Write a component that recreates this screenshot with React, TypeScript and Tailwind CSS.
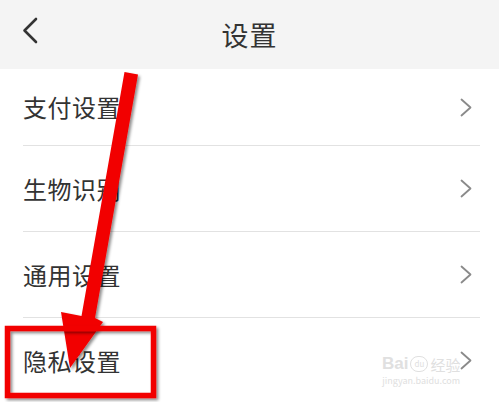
const ROWS = ["支付设置", "生物识别", "通用设置", "隐私设置"];

function BackIcon() {
    return (
        <svg width="16" height="27" viewBox="0 0 16 27" fill="none">
            <path d="M14 2 L2.5 13.5 L14 25" stroke="#333" strokeWidth="2.6" strokeLinecap="round" strokeLinejoin="round" />
        </svg>
    );
}

function ArrowRight() {
    return (
        <svg width="12" height="19" viewBox="0 0 12 19" fill="none">
            <path d="M1.5 1.5 L10.5 9.5 L1.5 17.5" stroke="#8a8a8a" strokeWidth="1.8" strokeLinecap="round" strokeLinejoin="round" />
        </svg>
    );
}

function SettingRow({ label, first }: { label: string; first?: boolean }) {
    return (
        <div className={`pl-[23px] pr-[19px] ${first ? "h-[77px]" : "h-[86px]"}`}>
            <div className="h-full flex items-center justify-between border-b border-[#e2e2e2] pr-[8px]">
                <span className="text-[24px] text-[#333] leading-none tracking-[0.5px]">{label}</span>
                <ArrowRight />
            </div>
        </div>
    );
}

// red annotation drawn over the screenshot: arrow + highlight box
function Annotation() {
    return (
        <svg className="absolute inset-0 pointer-events-none" width="499" height="402" viewBox="0 0 499 402">
            <defs>
                <filter id="shadow" x="-20%" y="-20%" width="140%" height="140%">
                    <feDropShadow dx="2" dy="2" stdDeviation="1.5" floodColor="#000" floodOpacity="0.45" />
                </filter>
            </defs>
            <polygon
                points="124.5,72 138,74.5 95,318 103,322 70,368 61,312 81.5,316"
                fill="#f20000"
                filter="url(#shadow)"
            />
            <rect x="7.5" y="328.5" width="146" height="67" fill="none" stroke="#f20000" strokeWidth="5.5" filter="url(#shadow)" />
        </svg>
    );
}

function Watermark() {
    return (
        <div className="absolute left-[382px] top-[355px] flex flex-col items-center text-[#e0e0e0] leading-none">
            <div className="flex items-end gap-[2px]">
                <span className="text-[17px] font-bold" style={{ fontFamily: "Arial, sans-serif" }}>Bai</span>
                <span className="w-[18px] h-[16px] rounded-full border border-[#e0e0e0] text-[8px] flex items-center justify-center">du</span>
                <span className="text-[15px]">经验</span>
            </div>
            <span className="text-[9px] mt-[4px]">jingyan.baidu.com</span>
        </div>
    );
}

export default function App() {
    return (
        <div
            className="relative w-[499px] h-[402px] overflow-hidden bg-white"
            style={{ fontFamily: '"Noto Sans CJK SC", "Noto Sans", sans-serif' }}
        >
            <div className="h-[69px] bg-[#f4f4f4] relative flex items-center justify-center">
                <div className="absolute left-[22px] top-[17px]">
                    <BackIcon />
                </div>
                <span className="text-[27px] text-[#333] leading-none tracking-[1px]">设置</span>
            </div>
            {ROWS.map((r, i) => (
                <SettingRow key={r} label={r} first={i === 0} />
            ))}
            <Watermark />
            <Annotation />
        </div>
    );
}
